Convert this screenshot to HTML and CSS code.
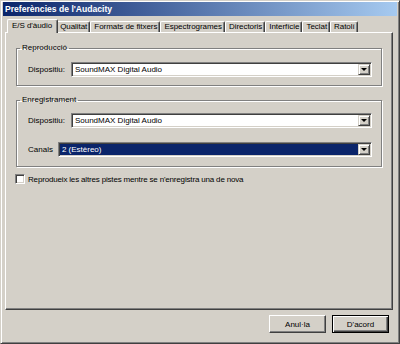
FILE: index.html
```html
<!DOCTYPE html>
<html lang="ca">
<head>
<meta charset="utf-8">
<title>Preferències de l'Audacity</title>
<link rel="stylesheet" href="styles.css">
</head>
<body>
<div class="window">
  <div class="titlebar">Preferències de l'Audacity</div>
  <div class="body">
    <div class="tabs">
      <div class="tab active">E/S d'àudio</div>
      <div class="tab">Qualitat</div>
      <div class="tab">Formats de fitxers</div>
      <div class="tab">Espectrogrames</div>
      <div class="tab">Directoris</div>
      <div class="tab">Interfície</div>
      <div class="tab">Teclat</div>
      <div class="tab">Ratolí</div>
    </div>
    <div class="panel">
      <fieldset class="group g1">
        <legend>Reproducció</legend>
        <div class="row r1">
          <span class="lbl">Dispositiu:</span>
          <div class="combo"><span class="val">SoundMAX Digital Audio</span><span class="drop"><i class="arrow"></i></span></div>
        </div>
      </fieldset>
      <fieldset class="group g2">
        <legend>Enregistrament</legend>
        <div class="row r1">
          <span class="lbl">Dispositiu:</span>
          <div class="combo"><span class="val">SoundMAX Digital Audio</span><span class="drop"><i class="arrow"></i></span></div>
        </div>
        <div class="row r2">
          <span class="lbl">Canals</span>
          <div class="combo selected"><span class="val">2 (Estèreo)</span><span class="drop"><i class="arrow"></i></span></div>
        </div>
      </fieldset>
      <div class="check"><span class="box"></span><span class="check-text">Reprodueix les altres pistes mentre se n'enregistra una de nova</span></div>
    </div>
    <div class="buttons">
      <div class="btn">Anul·la</div>
      <div class="btn default">D'acord</div>
    </div>
  </div>
</div>
</body>
</html>
```
FILE: styles.css
```css
html, body {
  margin: 0;
  padding: 0;
  background: #d4d0c8;
}
body {
  font-family: "Liberation Sans", Arial, sans-serif;
  font-size: 8px;
  color: #000;
}
.window {
  width: 400px;
  height: 344px;
  box-sizing: border-box;
  border: 1px solid;
  border-color: #d4d0c8 #404040 #404040 #d4d0c8;
  box-shadow: inset 1px 1px 0 #fff, inset -1px -1px 0 #808080;
  padding: 1px 2px 2px 2px;
  display: flex;
  flex-direction: column;
}
.titlebar {
  height: 14px;
  line-height: 14px;
  background: linear-gradient(to right, #0a246a, #a6caf0);
  color: #fff;
  font-weight: bold;
  font-size: 8.6px;
  padding-left: 2px;
  white-space: nowrap;
}
.body {
  flex: 1;
  padding: 3px 4px 0 2px;
  display: flex;
  flex-direction: column;
}
.tabs {
  display: flex;
  align-items: flex-end;
  height: 13px;
  padding-left: 3px;
}
.tab {
  height: 11px;
  line-height: 10px;
  box-sizing: border-box;
  padding: 0 2px 0 3px;
  border-top: 1px solid #fff;
  border-left: 1px solid #fff;
  border-right: 1px solid #404040;
  box-shadow: inset -1px 0 0 #808080;
  border-radius: 2px 2px 0 0;
  white-space: nowrap;
  background: #d4d0c8;
  letter-spacing: -0.05px;
}
.tab.active {
  height: 14px;
  margin: 0 -2px -1px -1px;
  padding: 0 5px 0 4px;
  line-height: 12px;
  position: relative;
  z-index: 1;
}
.panel {
  height: 278px;
  box-sizing: border-box;
  border: 1px solid;
  border-color: #fff #404040 #404040 #fff;
  box-shadow: inset -1px -1px 0 #808080;
  display: flex;
  flex-direction: column;
}
.group {
  border: 1px solid #808080;
  box-shadow: 1px 1px 0 #fff, inset 1px 1px 0 #fff;
  margin: 10px 10px 0 10px;
  padding: 0 9px 8px 0;
  min-width: 0;
}
.group legend {
  padding: 0 2px;
  margin-left: 3px;
  line-height: 10px;
}
.g2 {
  margin-top: 9px;
  padding-bottom: 9px;
}
.row {
  display: flex;
  align-items: center;
  gap: 6px;
  height: 15px;
  padding-left: 11px;
}
.g1 .r1 { margin-top: 9px; }
.g2 .r1 { margin-top: 8px; }
.g2 .r2 { margin-top: 14px; gap: 5px; }
.combo {
  flex: 1;
  height: 15px;
  box-sizing: border-box;
  border: 1px solid;
  border-color: #808080 #fff #fff #808080;
  box-shadow: inset 1px 1px 0 #404040, inset -1px -1px 0 #d4d0c8;
  background: #fff;
  display: flex;
  align-items: stretch;
  padding: 1px;
}
.combo .val {
  flex: 1;
  padding-left: 2px;
  line-height: 11px;
  white-space: nowrap;
  overflow: hidden;
}
.combo.selected .val {
  background: #0a246a;
  color: #fff;
}
.drop {
  width: 12px;
  box-sizing: border-box;
  background: #d4d0c8;
  border: 1px solid;
  border-color: #d4d0c8 #404040 #404040 #d4d0c8;
  box-shadow: inset 1px 1px 0 #fff, inset -1px -1px 0 #808080;
  display: flex;
  align-items: center;
  justify-content: center;
}
.arrow {
  display: block;
  width: 0;
  height: 0;
  border-left: 3px solid transparent;
  border-right: 3px solid transparent;
  border-top: 3px solid #000;
}
.check {
  display: flex;
  align-items: center;
  gap: 3px;
  margin: 7px 0 0 9px;
  height: 10px;
  white-space: nowrap;
}
.check-text {
  letter-spacing: -0.17px;
}
.box {
  width: 10px;
  height: 10px;
  box-sizing: border-box;
  background: #fff;
  border: 1px solid;
  border-color: #808080 #fff #fff #808080;
  box-shadow: inset 1px 1px 0 #404040, inset -1px -1px 0 #d4d0c8;
}
.buttons {
  display: flex;
  justify-content: flex-end;
  gap: 6px;
  margin-top: 5px;
  padding-right: 4px;
}
.btn {
  width: 57px;
  height: 18px;
  box-sizing: border-box;
  border: 1px solid;
  border-color: #fff #404040 #404040 #fff;
  box-shadow: inset -1px -1px 0 #808080;
  display: flex;
  align-items: center;
  justify-content: center;
}
.btn.default {
  border-color: #000;
  box-shadow: inset 1px 1px 0 #fff, inset -1px -1px 0 #404040, inset -2px -2px 0 #808080;
}
```
